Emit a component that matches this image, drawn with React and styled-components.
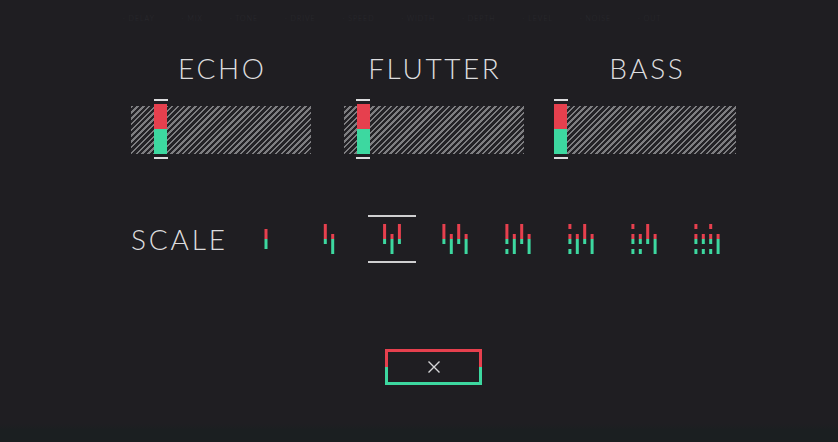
import React from "react";
import styled, { createGlobalStyle, css } from "styled-components";

const RED = "#e6404e";
const GREEN = "#3dd8a0";
const INK = "#dcdcde";

const Global = createGlobalStyle`
  html, body {
    margin: 0;
    padding: 0;
    background: #1f1e22;
  }
`;

const Page = styled.div`
  width: 838px;
  height: 442px;
  overflow: hidden;
  background: linear-gradient(
    to bottom,
    #1f1e22 0,
    #1f1e22 424px,
    #1b1f21 430px
  );
  font-family: Lato, "Open Sans", sans-serif;
  font-weight: 300;
  color: ${INK};
  display: flex;
  flex-direction: column;
`;

const TopStrip = styled.div`
  margin-top: 14px;
  height: 8px;
  padding-left: 123px;
  display: flex;
  align-items: center;
  gap: 27px;
  font-size: 7px;
  line-height: 8px;
  letter-spacing: 1px;
  color: #2a2a2f;
  white-space: nowrap;
`;

const Content = styled.div`
  width: 605px;
  margin-left: 131px;
  display: flex;
  flex-direction: column;
`;

const Channels = styled.div`
  margin-top: 29px;
  display: grid;
  grid-template-columns: repeat(3, 180px);
  column-gap: 32.5px;
`;

const Channel = styled.div`
  display: flex;
  flex-direction: column;
  align-items: center;
`;

const Title = styled.div`
  font-size: 28px;
  line-height: 34px;
  height: 34px;
  letter-spacing: 2.6px;
  margin-right: -2.6px;
`;

const Slider = styled.div`
  position: relative;
  margin-top: 14px;
  width: 180px;
  height: 62px;
  display: flex;
  align-items: center;
`;

const Hatch = styled.div`
  width: 100%;
  height: 48px;
  background: repeating-linear-gradient(
    135deg,
    #7e7e81 0 1.7px,
    #232226 1.7px 4.1px
  );
`;

const Handle = styled.div`
  position: absolute;
  top: 0;
  left: ${(p) => p.$pos}px;
  width: 13px;
  height: 62px;
  display: flex;
  flex-direction: column;
  align-items: center;
`;

const Tick = styled.div`
  width: 14px;
  height: 2px;
  background: ${INK};
`;

const Knob = styled.div`
  margin: 3px 0;
  width: 13px;
  height: 50px;
  background: linear-gradient(to bottom, ${RED} 50%, ${GREEN} 50%);
`;

const ScaleRow = styled.div`
  margin-top: 54px;
  display: grid;
  grid-template-columns: 96px repeat(8, 48px);
  column-gap: 15px;
  align-items: center;
`;

const ScaleLabel = styled.div`
  font-size: 28px;
  line-height: 48px;
  letter-spacing: 2.8px;
  white-space: nowrap;
`;

const ScaleCell = styled.button`
  width: 48px;
  height: 48px;
  padding: 0;
  background: transparent;
  border: 0;
  border-top: 2px solid transparent;
  border-bottom: 2px solid transparent;
  display: flex;
  align-items: center;
  justify-content: center;
  cursor: pointer;
  ${(p) =>
    p.$active &&
    css`
      border-top-color: #cfcfd1;
      border-bottom-color: #cfcfd1;
    `}
`;

const CloseRow = styled.div`
  margin-top: 86px;
  display: flex;
  justify-content: center;
`;

const CloseButton = styled.button`
  width: 97px;
  height: 36px;
  padding: 0;
  box-sizing: border-box;
  background: transparent;
  border: 3px solid;
  border-image: linear-gradient(to bottom, ${RED} 50%, ${GREEN} 50%) 1;
  display: flex;
  align-items: center;
  justify-content: center;
  cursor: pointer;
`;

// each bar: 6 rows of 5px, rows 0-2 above the midline, 3-5 below
const PATTERNS = [
  [".rrgg."],
  ["rrrg..", "..rggg"],
  ["rrrg..", "..rggg", "rrrg.."],
  ["rrrg..", "..rggg", "rrrg..", "..rggg"],
  ["rrrg.g", "..rggg", "rrrg..", "..rggg"],
  ["r.rg.g", "..rggg", "rrrg..", "..rggg"],
  ["r.rg.g", "..rg.g", "rrrg..", "..rggg"],
  ["r.rg.g", "..rg.g", "r.rg.g", "..rggg"],
];

const ScaleIcon = ({ bars }) => {
  const pitch = 7.4;
  const w = (bars.length - 1) * pitch + 3;
  return (
    <svg width="44" height="40" viewBox="0 0 44 40">
      <g transform={`translate(${(44 - w) / 2} 5)`}>
        {bars.map((bar, i) =>
          bar.split("").map((c, r) =>
            c === "." ? null : (
              <rect
                key={`${i}-${r}`}
                x={i * pitch}
                y={r * 5}
                width="3"
                height="5"
                fill={c === "r" ? RED : GREEN}
              />
            )
          )
        )}
      </g>
    </svg>
  );
};

const CloseIcon = () => (
  <svg width="14" height="14" viewBox="0 0 14 14">
    <path
      d="M1.5 1.5 L12.5 12.5 M12.5 1.5 L1.5 12.5"
      stroke="#d6d6d8"
      strokeWidth="1.4"
      fill="none"
    />
  </svg>
);

const channels = [
  { name: "ECHO", pos: 23 },
  { name: "FLUTTER", pos: 13 },
  { name: "BASS", pos: -2 },
];

const faint = [
  "· DELAY",
  "· MIX",
  "· TONE",
  "· DRIVE",
  "· SPEED",
  "· WIDTH",
  "· DEPTH",
  "· LEVEL",
  "· NOISE",
  "· OUT",
];

const App = () => {
  return (
    <Page>
      <Global />
      <TopStrip>
        {faint.map((f) => (
          <span key={f}>{f}</span>
        ))}
      </TopStrip>
      <Content>
        <Channels>
          {channels.map((c) => (
            <Channel key={c.name}>
              <Title>{c.name}</Title>
              <Slider>
                <Hatch />
                <Handle $pos={c.pos}>
                  <Tick />
                  <Knob />
                  <Tick />
                </Handle>
              </Slider>
            </Channel>
          ))}
        </Channels>
        <ScaleRow>
          <ScaleLabel>SCALE</ScaleLabel>
          {PATTERNS.map((bars, i) => (
            <ScaleCell key={i} $active={i === 2}>
              <ScaleIcon bars={bars} />
            </ScaleCell>
          ))}
        </ScaleRow>
        <CloseRow>
          <CloseButton>
            <CloseIcon />
          </CloseButton>
        </CloseRow>
      </Content>
    </Page>
  );
};

export default App;
